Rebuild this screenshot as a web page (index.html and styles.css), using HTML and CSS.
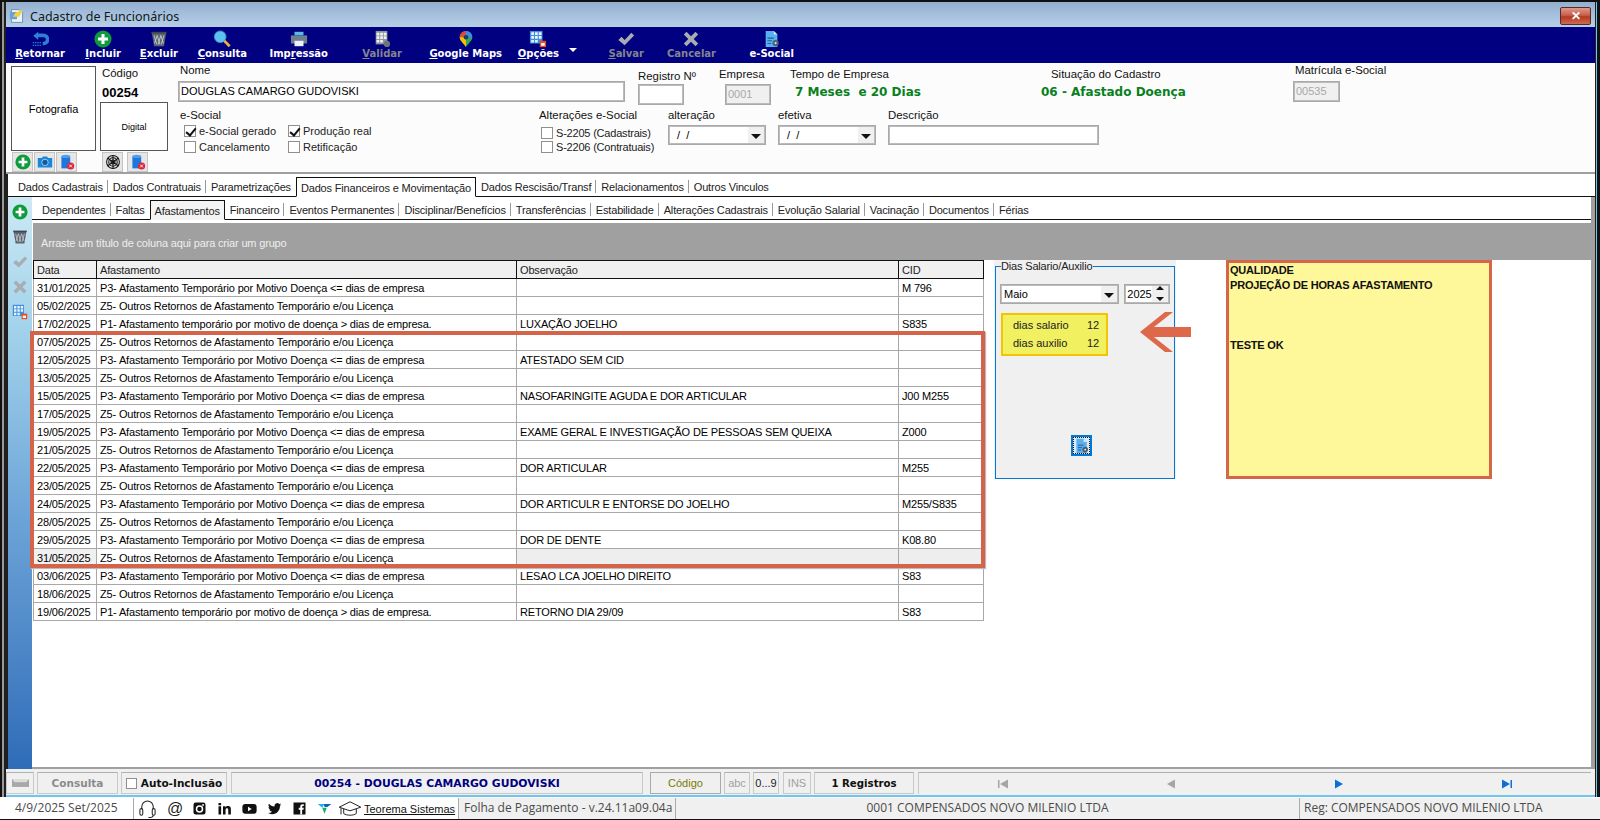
FILE: index.html
```html
<!DOCTYPE html>
<html lang="pt-BR">
<head>
<meta charset="utf-8">
<title>Cadastro de Funcionários</title>
<link rel="stylesheet" href="styles.css">
</head>
<body>
<svg class="defs" width="0" height="0" aria-hidden="true">
  <symbol id="i-plus" viewBox="0 0 20 20"><circle cx="10" cy="10" r="9.5" fill="#0f9a3c"/><path d="M10 4.5v11M4.5 10h11" stroke="#fff" stroke-width="3.4"/></symbol>
  <symbol id="i-return" viewBox="0 0 20 20"><path d="M8 2 2.5 6.5 8 11V8h6a2.5 2.5 0 0 1 0 5h-1v4h1a6.5 6.5 0 0 0 0-13H8z" fill="#2f7fd6"/><path d="M2 14h10M2 17h10" stroke="#2f7fd6" stroke-width="1.4" stroke-dasharray="1.5 1"/></symbol>
  <symbol id="i-trash" viewBox="0 0 20 20"><path d="M2 3h16l-2.5 15h-11z" fill="#5c6670"/><path d="M4.5 6l3 10M8 6l3 10M12 6l3 9M15.500 6l-3 10M12 6l-3 10M8 6l-3 9" stroke="#cfd5da" stroke-width=".9"/><path d="M1.500 2h17v2h-17z" fill="#3f4850"/></symbol>
  <symbol id="i-search" viewBox="0 0 20 20"><circle cx="8" cy="7.500" r="6.500" fill="#5cc0f0" stroke="#2f90cc"/><path d="M12.500 12l6 6" stroke="#e8b040" stroke-width="3"/></symbol>
  <symbol id="i-print" viewBox="0 0 20 20"><path d="M5 2h10v4H5z" fill="#5cb8e6"/><path d="M1 6h18v9H1z" fill="#6e7f8e"/><path d="M5 12h10v6H5z" fill="#e8f2f8"/></symbol>
  <symbol id="i-grid-gear" viewBox="0 0 20 20"><path d="M3 1h13v15H3z" fill="#8d949b"/><path d="M4 3h3v3H4zm4 0h3v3H8zm4 0h3v3h-3zM4 7h3v3H4zm4 0h3v3H8zm4 0h3v3h-3zM4 11h3v3H4zm4 0h3v3H8z" fill="#eef0f2"/><circle cx="15.500" cy="15.500" r="3.500" fill="#6d747b"/></symbol>
  <symbol id="i-pin" viewBox="0 0 20 20"><path d="M10 1a7 7 0 0 1 7 7c0 4-4 6-7 11-3-5-7-7-7-11a7 7 0 0 1 7-7z" fill="#34a853"/><path d="M10 1a7 7 0 0 1 7 7l-4 0a3 3 0 0 0-3-3z" fill="#4285f4"/><path d="M3 8a7 7 0 0 1 7-7v4a3 3 0 0 0-3 3z" fill="#ea4335"/><path d="M3 8h4l3 3v8c-3-5-7-7-7-11z" fill="#fbbc04"/><circle cx="10" cy="8" r="2.500" fill="#1a3a80"/></symbol>
  <symbol id="i-grid-red" viewBox="0 0 20 20"><path d="M1 1h14v14H1z" fill="#3f8fe0"/><path d="M2.500 2.500h3v3h-3zm4.200 0h3v3h-3zm4.200 0h3v3h-3zM2.500 6.700h3v3h-3zm4.200 0h3v3h-3zm4.200 0h3v3h-3zM2.500 11h3v3h-3zm4.200 0h3v3h-3z" fill="#e8f3fd"/><path d="M12 12h7v7h-7z" fill="#f04a20"/><path d="M13.500 14.500h4v3h-4z" fill="#fff"/></symbol>
  <symbol id="i-check" viewBox="0 0 20 20"><path d="M1.500 11 5 7.500l3.500 3.500L16 3l3 3-10.500 11z" fill="#a7adb2"/></symbol>
  <symbol id="i-x" viewBox="0 0 20 20"><path d="M2 5l3-3 5 5 5-5 3 3-5 5 5 5-3 3-5-5-5 5-3-3 5-5z" fill="#a7adb2"/></symbol>
  <symbol id="i-doc-gear" viewBox="0 0 20 20"><path d="M3 1h9l4 4v14H3z" fill="#59b0ee"/><path d="M12 1l4 4h-4z" fill="#d5ecfb"/><path d="M5 9h7M5 12h5M5 15h4" stroke="#1d5f9c" stroke-width="1.200"/><circle cx="14" cy="14.500" r="3.500" fill="#4a5f70"/><circle cx="14" cy="14.500" r="1.200" fill="#cfe4f2"/></symbol>
  <symbol id="i-camera" viewBox="0 0 20 20"><path d="M1 5h5l1.500-2h5L14 5h5v12H1z" fill="#1c87d8"/><circle cx="10" cy="10.500" r="4" fill="#0d5ba0" stroke="#bfe0f8"/></symbol>
  <symbol id="i-db-del" viewBox="0 0 20 20"><path d="M3 3h11v15H3z" fill="#1f76dc"/><ellipse cx="8.500" cy="3" rx="5.500" ry="2" fill="#4da0ee"/><circle cx="14.500" cy="15" r="4.500" fill="#e0243a"/><path d="M12.800 13.300l3.400 3.400m0-3.400l-3.400 3.400" stroke="#fff" stroke-width="1.200"/></symbol>
  <symbol id="i-finger" viewBox="0 0 20 20"><g fill="none" stroke="#111" stroke-width="1.300"><circle cx="10" cy="10" r="8"/><circle cx="10" cy="10" r="5.300"/><circle cx="10" cy="10" r="2.500"/><path d="M3 5l14 10M3 15 17 5M10 2v16"/></g></symbol>
  <symbol id="i-wicon" viewBox="0 0 20 20"><path d="M3 2h10l4 4v12H3z" fill="#e8f3fb" stroke="#5b7fa0"/><path d="M1 5h9v9H1z" fill="#6a9fd8"/><path d="M5 11l3-5 9-4-4 9z" fill="#f5d142"/></symbol>
  <symbol id="i-headset" viewBox="0 0 20 20"><g fill="none" stroke="#222" stroke-width="1.100"><path d="M4 11V8a6 6 0 0 1 12 0v3"/><rect x="2" y="10" width="3" height="7" rx="1.500"/><rect x="15" y="10" width="3" height="7" rx="1.500"/><path d="M16 17c0 2-3 2.500-5 2.500"/></g></symbol>
  <symbol id="i-insta" viewBox="0 0 20 20"><rect x="2" y="2" width="16" height="16" rx="3" fill="#111"/><circle cx="10" cy="10.500" r="4" fill="none" stroke="#fff" stroke-width="2"/><circle cx="14.700" cy="5.300" r="1.200" fill="#fff"/></symbol>
  <symbol id="i-in" viewBox="0 0 20 20"><path d="M2 7h3.500v11H2zM2 2.500h3.500V5.500H2zM8 7h3.300v1.600C12 7.500 13.300 6.800 15 6.800c2.500 0 3.500 1.700 3.500 4.200v7H15v-6.300c0-1.300-.5-2.100-1.600-2.100s-2 .8-2 2.300V18H8z" fill="#111"/></symbol>
  <symbol id="i-yt" viewBox="0 0 20 20"><rect x="0.500" y="4" width="19" height="13" rx="4" fill="#111"/><path d="M8 7.500v6l5-3z" fill="#fff"/></symbol>
  <symbol id="i-tw" viewBox="0 0 20 20"><path d="M19 4.500c-.7.300-1.400.500-2 .6.800-.5 1.300-1.200 1.600-2-.7.400-1.500.7-2.300.9A3.700 3.700 0 0 0 10 7.300C7 7.100 4.300 5.700 2.500 3.500 1.500 5.200 2 7.300 3.600 8.400c-.6 0-1.100-.2-1.600-.5 0 1.800 1.300 3.300 3 3.700-.5.100-1.100.2-1.700.1.500 1.500 1.900 2.500 3.500 2.600A7.500 7.500 0 0 1 1 15.800c1.700 1 3.600 1.700 5.700 1.700 6.900 0 10.800-5.800 10.500-11 .7-.6 1.300-1.200 1.800-2z" fill="#111"/></symbol>
  <symbol id="i-fb" viewBox="0 0 20 20"><rect x="2" y="2" width="16" height="16" fill="#111"/><path d="M11 18v-6.500H9V9h2V7.200c0-2 1.200-3 3-3h1.700v2.500h-1.200c-.8 0-1 .4-1 1V9h2.200l-.4 2.500h-1.800V18z" fill="#fff"/></symbol>
  <symbol id="i-logo" viewBox="0 0 20 20"><path d="M1 4h9l-3 5z" fill="#18b6e6"/><path d="M9 4h10l-5 4h-4z" fill="#1060c0"/><path d="M7 9h6l-3 8z" fill="#18b060"/></symbol>
  <symbol id="i-cap" viewBox="0 0 26 20"><g fill="none" stroke="#222" stroke-width="1.100"><path d="M1 8l12-6 12 6-12 4z"/><path d="M6 10v5c3 2.500 11 2.500 14 0v-5"/><path d="M3 9v7"/></g></symbol>
  <symbol id="i-kb" viewBox="0 0 26 12"><path d="M0 0h26v12H0z" fill="#a7a7a7"/><path d="M0 0l4 5h18l4-5z" fill="#dcdcdc"/></symbol>
</svg>

<div class="frame">
  <div class="window">
    <div class="title">
      <svg class="ico16"><use href="#i-wicon"/></svg>
      <span>Cadastro de Funcionários</span>
      <button class="close" aria-label="Fechar">✕</button>
    </div>

    <div class="toolbar">
      <div class="tb"><svg class="ico18"><use href="#i-return"/></svg><span><u>R</u>etornar</span></div>
      <div class="tb"><svg class="ico18"><use href="#i-plus"/></svg><span><u>I</u>ncluir</span></div>
      <div class="tb"><svg class="ico18"><use href="#i-trash"/></svg><span><u>E</u>xcluir</span></div>
      <div class="tb"><svg class="ico18"><use href="#i-search"/></svg><span><u>C</u>onsulta</span></div>
      <div class="tb"><svg class="ico18"><use href="#i-print"/></svg><span>Imp<u>r</u>essão</span></div>
      <div class="tb off"><svg class="ico18"><use href="#i-grid-gear"/></svg><span><u>V</u>alidar</span></div>
      <div class="tb"><svg class="ico18"><use href="#i-pin"/></svg><span><u>G</u>oogle Maps</span></div>
      <div class="tb"><svg class="ico18"><use href="#i-grid-red"/></svg><span><u>O</u>pções</span></div>
      <div class="tb-tri"></div>
      <div class="tb off"><svg class="ico18"><use href="#i-check"/></svg><span><u>S</u>alvar</span></div>
      <div class="tb off"><svg class="ico18"><use href="#i-x"/></svg><span>Cancelar</span></div>
      <div class="tb"><svg class="ico18"><use href="#i-doc-gear"/></svg><span>e-Social</span></div>
    </div>

    <div class="header">
      <div class="photo-col">
        <div class="photo">Fotografia</div>
        <div class="mini-row">
          <button class="mini"><svg class="ico15"><use href="#i-plus"/></svg></button>
          <button class="mini"><svg class="ico15"><use href="#i-camera"/></svg></button>
          <button class="mini"><svg class="ico15"><use href="#i-db-del"/></svg></button>
        </div>
      </div>
      <div class="code-col">
        <div class="lbl code-lbl">Código</div>
        <div class="code-val">00254</div>
        <div class="digital">Digital</div>
        <div class="mini-row mini-row-b">
          <button class="mini"><svg class="ico15"><use href="#i-finger"/></svg></button>
          <button class="mini"><svg class="ico15"><use href="#i-db-del"/></svg></button>
        </div>
      </div>
      <div class="form-col">
        <div class="row-a">
          <div class="f f-nome"><div class="lbl">Nome</div><div class="input">DOUGLAS CAMARGO GUDOVISKI</div></div>
          <div class="f f-reg"><div class="lbl">Registro Nº</div><div class="input"></div></div>
          <div class="f f-emp"><div class="lbl">Empresa</div><div class="input dis">0001</div></div>
          <div class="f f-tempo"><div class="lbl">Tempo de Empresa</div><div class="val-green">7 Meses&nbsp; e 20 Dias</div></div>
          <div class="f f-sit"><div class="lbl">Situação do Cadastro</div><div class="val-green">06 - Afastado Doença</div></div>
          <div class="f f-mat"><div class="lbl">Matrícula e-Social</div><div class="input dis">00535</div></div>
        </div>
        <div class="row-b">
          <div class="g-es">
            <div class="lbl">e-Social</div>
            <div class="checks">
              <label class="ck"><i class="box on"></i>e-Social gerado</label>
              <label class="ck"><i class="box on"></i>Produção real</label>
              <label class="ck"><i class="box"></i>Cancelamento</label>
              <label class="ck"><i class="box"></i>Retificação</label>
            </div>
          </div>
          <div class="g-alt">
            <div class="lbl">Alterações e-Social</div>
            <label class="ck ck-t"><i class="box"></i>S-2205 (Cadastrais)</label>
            <label class="ck ck-t"><i class="box"></i>S-2206 (Contratuais)</label>
          </div>
          <div class="f f-d"><div class="lbl">alteração</div><div class="input sel">&nbsp;/&nbsp;&nbsp;/<b class="drop"></b></div></div>
          <div class="f f-d"><div class="lbl">efetiva</div><div class="input sel">&nbsp;/&nbsp;&nbsp;/<b class="drop"></b></div></div>
          <div class="f f-desc"><div class="lbl">Descrição</div><div class="input"></div></div>
        </div>
      </div>
    </div>

    <div class="tabs">
      <span class="tab">Dados Cadastrais</span>
      <span class="tab">Dados Contratuais</span>
      <span class="tab pre">Parametrizações</span>
      <span class="tab active">Dados Financeiros e Movimentação</span>
      <span class="tab">Dados Rescisão/Transf</span>
      <span class="tab">Relacionamentos</span>
      <span class="tab last">Outros Vinculos</span>
    </div>

    <div class="body">
      <div class="side">
        <svg class="ico16 s1"><use href="#i-plus"/></svg>
        <svg class="ico16"><use href="#i-trash"/></svg>
        <svg class="ico16"><use href="#i-check"/></svg>
        <svg class="ico16"><use href="#i-x"/></svg>
        <svg class="ico16"><use href="#i-grid-red"/></svg>
      </div>
      <div class="content">
        <div class="subtabs">
          <span class="tab">Dependentes</span>
          <span class="tab pre">Faltas</span>
          <span class="tab active">Afastamentos</span>
          <span class="tab">Financeiro</span>
          <span class="tab">Eventos Permanentes</span>
          <span class="tab">Disciplinar/Benefícios</span>
          <span class="tab">Transferências</span>
          <span class="tab">Estabilidade</span>
          <span class="tab">Alterações Cadastrais</span>
          <span class="tab">Evolução Salarial</span>
          <span class="tab">Vacinação</span>
          <span class="tab">Documentos</span>
          <span class="tab last">Férias</span>
        </div>
        <div class="groupbar">Arraste um título de coluna aqui para criar um grupo</div>
        <div class="work">
          <div class="grid-wrap">
            <table class="grid">
              <colgroup><col class="c1"><col class="c2"><col class="c3"><col class="c4"></colgroup>
              <thead><tr><th>Data</th><th>Afastamento</th><th>Observação</th><th>CID</th></tr></thead>
              <tbody>
                <tr><td>31/01/2025</td><td>P3- Afastamento Temporário por Motivo Doença &lt;= dias de empresa</td><td></td><td>M 796</td></tr>
                <tr><td>05/02/2025</td><td>Z5- Outros Retornos de Afastamento Temporário e/ou Licença</td><td></td><td></td></tr>
                <tr><td>17/02/2025</td><td>P1- Afastamento temporário por motivo de doença &gt; dias de empresa.</td><td>LUXAÇÃO JOELHO</td><td>S835</td></tr>
                <tr><td>07/05/2025</td><td>Z5- Outros Retornos de Afastamento Temporário e/ou Licença</td><td></td><td></td></tr>
                <tr><td>12/05/2025</td><td>P3- Afastamento Temporário por Motivo Doença &lt;= dias de empresa</td><td>ATESTADO SEM CID</td><td></td></tr>
                <tr><td>13/05/2025</td><td>Z5- Outros Retornos de Afastamento Temporário e/ou Licença</td><td></td><td></td></tr>
                <tr><td>15/05/2025</td><td>P3- Afastamento Temporário por Motivo Doença &lt;= dias de empresa</td><td>NASOFARINGITE AGUDA E DOR ARTICULAR</td><td>J00 M255</td></tr>
                <tr><td>17/05/2025</td><td>Z5- Outros Retornos de Afastamento Temporário e/ou Licença</td><td></td><td></td></tr>
                <tr><td>19/05/2025</td><td>P3- Afastamento Temporário por Motivo Doença &lt;= dias de empresa</td><td>EXAME GERAL E INVESTIGAÇÃO DE PESSOAS SEM QUEIXA</td><td>Z000</td></tr>
                <tr><td>21/05/2025</td><td>Z5- Outros Retornos de Afastamento Temporário e/ou Licença</td><td></td><td></td></tr>
                <tr><td>22/05/2025</td><td>P3- Afastamento Temporário por Motivo Doença &lt;= dias de empresa</td><td>DOR ARTICULAR</td><td>M255</td></tr>
                <tr><td>23/05/2025</td><td>Z5- Outros Retornos de Afastamento Temporário e/ou Licença</td><td></td><td></td></tr>
                <tr><td>24/05/2025</td><td>P3- Afastamento Temporário por Motivo Doença &lt;= dias de empresa</td><td>DOR ARTICULR E ENTORSE DO JOELHO</td><td>M255/S835</td></tr>
                <tr><td>28/05/2025</td><td>Z5- Outros Retornos de Afastamento Temporário e/ou Licença</td><td></td><td></td></tr>
                <tr><td>29/05/2025</td><td>P3- Afastamento Temporário por Motivo Doença &lt;= dias de empresa</td><td>DOR DE DENTE</td><td>K08.80</td></tr>
                <tr class="cur"><td>31/05/2025</td><td>Z5- Outros Retornos de Afastamento Temporário e/ou Licença</td><td></td><td></td></tr>
                <tr><td>03/06/2025</td><td>P3- Afastamento Temporário por Motivo Doença &lt;= dias de empresa</td><td>LESAO LCA JOELHO DIREITO</td><td>S83</td></tr>
                <tr><td>18/06/2025</td><td>Z5- Outros Retornos de Afastamento Temporário e/ou Licença</td><td></td><td></td></tr>
                <tr><td>19/06/2025</td><td>P1- Afastamento temporário por motivo de doença &gt; dias de empresa.</td><td>RETORNO DIA 29/09</td><td>S83</td></tr>
              </tbody>
            </table>
            <div class="redbox"></div>
          </div>

          <div class="panel">
            <fieldset class="dias">
              <legend>Dias Salario/Auxilio</legend>
              <div class="dias-top">
                <div class="input sel mes">Maio<b class="drop"></b></div>
                <div class="input spin">2025<b class="spinbtn"><i class="up"></i><i class="down"></i></b></div>
              </div>
              <div class="ybox">
                <div class="yrow"><span>dias salario</span><span>12</span></div>
                <div class="yrow"><span>dias auxilio</span><span>12</span></div>
              </div>
              <button class="calc"><svg class="ico16"><use href="#i-doc-gear"/></svg></button>
            </fieldset>
            <svg class="arrow" viewBox="0 0 51 40"><path d="M0 20 25 0h8L14 15h37v10H14l19 15h-8z" fill="#dd684a"/></svg>
          </div>

          <div class="note">QUALIDADE<br>PROJEÇÃO DE HORAS AFASTAMENTO<br><br><br><br>TESTE OK</div>
        </div>
      </div>
    </div>

    <div class="status1">
      <div class="cell c-kb"><svg class="kb"><use href="#i-kb"/></svg></div>
      <div class="cell c-cons">Consulta</div>
      <div class="cell c-auto"><i class="box"></i>Auto-Inclusão</div>
      <div class="cell c-name">00254 - DOUGLAS CAMARGO GUDOVISKI</div>
      <div class="cell c-cod">Código</div>
      <div class="cell c-abc">abc</div>
      <div class="cell c-09">0...9</div>
      <div class="cell c-ins">INS</div>
      <div class="cell c-reg">1 Registros</div>
      <div class="cell c-nav">
        <svg class="nav" viewBox="0 0 12 12"><path d="M1 2h1.500v8H1zM11 1.500v9L3 6z" fill="#a5a5a5"/></svg>
        <svg class="nav" viewBox="0 0 12 12"><path d="M10 1.500v9L2 6z" fill="#a5a5a5"/></svg>
        <svg class="nav" viewBox="0 0 12 12"><path d="M2 1.500v9L10 6z" fill="#0a6fd8"/></svg>
        <svg class="nav" viewBox="0 0 12 12"><path d="M1 1.500v9L9 6zM9.500 2H11v8H9.500z" fill="#0a6fd8"/></svg>
      </div>
    </div>
  </div>

  <div class="status2">
    <div class="s2-date">4/9/2025 Set/2025</div>
    <div class="s2-icons">
      <svg class="soc s-head"><use href="#i-headset"/></svg>
      <span class="at">@</span>
      <svg class="soc"><use href="#i-insta"/></svg>
      <svg class="soc"><use href="#i-in"/></svg>
      <svg class="soc"><use href="#i-yt"/></svg>
      <svg class="soc"><use href="#i-tw"/></svg>
      <svg class="soc"><use href="#i-fb"/></svg>
      <svg class="soc"><use href="#i-logo"/></svg>
      <svg class="cap"><use href="#i-cap"/></svg>
      <span class="teo">Teorema Sistemas</span>
    </div>
    <div class="s2-ver">Folha de Pagamento - v.24.11a09.04a</div>
    <div class="s2-emp">0001 COMPENSADOS NOVO MILENIO LTDA</div>
    <div class="s2-reg">Reg: COMPENSADOS NOVO MILENIO LTDA</div>
  </div>
</div>
</body>
</html>
```
FILE: styles.css
```css
* { box-sizing: border-box; }
html, body { margin: 0; padding: 0; }
body { width: 1600px; height: 820px; overflow: hidden; background: #fff; font: 11px "Liberation Sans", Tahoma, sans-serif; color: #000; }
.defs { position: absolute; }
button { padding: 0; margin: 0; font: inherit; }

.frame { width: 1600px; height: 820px; display: flex; flex-direction: column; background: #1a1a1a; }
.window { height: 797px; padding: 3px 5px 0 6px; border-top: 2px solid #111; border-left: 1px solid #111; display: flex; flex-direction: column; background: #1f1f1f; position: relative; box-shadow: inset -3px 0 0 #111, inset -4px 0 0 #6ec6ee, inset 1px 0 0 #111, inset 3px 0 0 #999; }
.ico16 { width: 16px; height: 16px; display: block; }
.ico18 { width: 18px; height: 18px; display: block; }
.ico15 { width: 16px; height: 16px; display: block; }

.title { flex: none; height: 25px; margin: -3px 0 0 -1px; padding: 3px 0 0 3px; display: flex; align-items: center; gap: 5px; background: linear-gradient(#93afcf, #b7d0e9); font: 12.500px "Noto Sans", sans-serif; color: #101820; }
.title span { flex: 1; }
.close { width: 31px; height: 18px; margin-right: 4px; border: 1px solid #5b2b23; border-radius: 2px; background: linear-gradient(#dd9a8c, #c8604c 45%, #b5391f 55%, #cc6a55); color: #fff; font-size: 12px; font-weight: 700; line-height: 14px; }

.toolbar { height: 36px; flex: none; margin-left: -1px; padding-left: 8px; background: #000080; display: grid; grid-template-columns: 51px 56px 57px 69px 81px 74px 100px 57px 20px 65px 72px 78px; align-items: start; }
.tb { justify-self: end; display: flex; flex-direction: column; align-items: center; color: #fff; font: 700 10px/14px "DejaVu Sans", sans-serif; white-space: nowrap; padding-top: 3px; }
.tb span { display: block; margin-top: -1px; }
.tb.off { color: #83868c; }
.tb-tri { justify-self: end; margin: 21px 2px 0 0; width: 0; height: 0; border: 4px solid transparent; border-top: 4px solid #fff; border-bottom: 0; }

.header { height: 111px; flex: none; margin-left: -1px; padding: 3px 0 0 5px; display: flex; background: #fcfcfc; border-bottom: 2px solid #a0a0a0; }
.photo-col { width: 89px; flex: none; }
.photo { width: 85px; height: 85px; border: 1px solid #555; background: #fff; display: flex; align-items: center; justify-content: center; }
.mini-row { display: flex; gap: 1px; padding-left: 1px; margin-top: 1px; }
.mini { width: 21px; height: 20px; border: 1px solid #c4c4c4; background: #e6e6e6; display: flex; align-items: center; justify-content: center; }
.code-col { width: 78px; flex: none; }
.lbl { line-height: 14px; white-space: nowrap; color: #111; font-size: 11.400px; }
.code-lbl { padding-left: 2px; line-height: 16px; margin-top: -1px; }
.code-val { font: 700 13px/17px "Liberation Sans", sans-serif; padding-left: 2px; margin-top: 3px; }
.digital { width: 68px; height: 49px; margin-top: 1px; border: 1px solid #555; background: #fff; display: flex; align-items: center; justify-content: center; font-size: 9px; }
.mini-row-b { gap: 4px; padding-left: 2px; }

.form-col { flex: 1; }
.row-a { display: flex; height: 42px; }
.row-b { display: flex; }
.f { flex: none; }
.input { height: 21px; border: 1px solid #a9a9a9; background: #fff; padding-left: 2px; line-height: 18px; white-space: nowrap; position: relative; box-shadow: inset 0 0 0 1px #bbb; }
.input.dis { background: #f0f0f0; color: #a8a8a8; }
.f-nome { width: 447px; }
.f-nome .lbl { padding-left: 2px; line-height: 13px; margin-top: -2px; }
.f-nome .input { margin-top: 4px; }
.f-reg { width: 46px; margin-left: 13px; padding-top: 3px; }
.f-reg .input { margin-top: 1px; }
.f-emp { width: 46px; margin-left: 41px; padding-top: 1px; }
.f-emp .lbl { margin-left: -6px; }
.f-emp .input { margin-top: 3px; }
.f-tempo { width: 170px; margin-left: 19px; padding-top: 1px; }
.val-green { color: #08801e; font: 700 12px/18px "DejaVu Sans", sans-serif; margin-top: 2px; margin-left: 5px; white-space: nowrap; }
.f-sit { width: 200px; margin-left: 91px; padding-top: 1px; }
.f-sit .val-green { margin-left: -10px; }
.f-mat { width: 47px; margin-left: 42px; }
.f-mat .lbl { padding-left: 2px; margin-top: -2px; line-height: 13px; }
.f-mat .input { margin-top: 4px; }

.g-es { width: 361px; padding-left: 2px; }
.checks { display: grid; grid-template-columns: 104px 130px; padding: 2px 0 0 4px; row-gap: 2px; }
.ck { display: flex; align-items: center; gap: 3px; line-height: 14px; white-space: nowrap; color: #222; }
.box { display: inline-block; flex: none; width: 12px; height: 12px; border: 1px solid #8f8f8f; background: #fff; position: relative; }
.box.on::after { content: ""; position: absolute; left: 3px; top: 0; width: 4px; height: 8px; border: solid #111; border-width: 0 2px 2px 0; transform: rotate(40deg); }
.g-alt { width: 129px; }
.ck-t { padding-left: 2px; letter-spacing: -.2px; }
.g-alt .lbl { margin-bottom: 4px; }
.f-d { width: 98px; margin-right: 12px; }
.f-d .input, .f-desc .input { height: 20px; margin-top: 3px; }
.f-desc { width: 211px; }
.sel { padding-left: 5px; }
.drop { position: absolute; right: 1px; top: 1px; bottom: 1px; width: 16px; background: #f0f0f0; }
.drop::after { content: ""; position: absolute; left: 3px; top: 7px; border: 5px solid transparent; border-top: 5px solid #111; border-bottom: 0; }

.tabs { height: 23px; flex: none; margin-left: 1px; display: flex; align-items: flex-end; background: #fff; border-bottom: 1px solid #111; padding-left: 5px; position: relative; }
.tab { height: 19px; padding: 0 5px; line-height: 20px; white-space: nowrap; color: #222; position: relative; letter-spacing: -.17px; }
.tab + .tab::before { content: ""; position: absolute; left: -1px; top: 3px; bottom: 3px; width: 1px; background: #999; }
.tab.active { height: 20px; margin-bottom: -1px; border: 1px solid #111; border-bottom: 1px solid #fff; background: #fff; z-index: 1; padding: 0 4px; }
.tab.active::before, .tab.active + .tab::before { display: none; }

.body { flex: 1; min-height: 0; margin-left: 1px; display: flex; background: #fff; }
.side { width: 24px; flex: none; background: linear-gradient(#cce9f4, #9fd0ea 25%, #6ea5d8 55%, #2f6cb8); display: flex; flex-direction: column; align-items: center; gap: 9px; padding-top: 7px; }
.content { flex: 1; min-width: 0; display: flex; flex-direction: column; border-right: 4px solid #a0a0a0; border-bottom: 2px solid #a0a0a0; }
.subtabs { height: 23px; flex: none; display: flex; align-items: flex-end; border-bottom: 1px solid #111; padding-left: 5px; margin-bottom: 3px; }
.subtabs .active { background: #f4f4f4; border-bottom-color: #f4f4f4; }
.groupbar { height: 37px; flex: none; margin-left: 1px; background: #a0a0a0; color: #eee; padding: 13px 0 0 8px; line-height: 14px; letter-spacing: -.17px; }
.work { flex: 1; min-height: 0; display: flex; align-items: flex-start; padding-left: 1px; }
.grid-wrap { width: 950px; flex: none; position: relative; }
.grid { width: 950px; table-layout: fixed; border-collapse: collapse; letter-spacing: -.17px; }
.c1 { width: 63px; } .c2 { width: 420px; } .c3 { width: 382px; } .c4 { width: 85px; }
.grid th { height: 18px; background: #f0f0f0; font-weight: 400; text-align: left; border: 1px solid #111; padding: 1px 3px 0; line-height: 15px; color: #222; }
.grid td { height: 18px; border: 1px solid #a8a8a8; padding: 1px 2px 0 3px; line-height: 15px; white-space: nowrap; overflow: hidden; }
.grid tr.cur td:first-child { background: #f0f0f0; }
.grid tr.cur td:nth-child(n+3) { background: #eee; }
.redbox { position: absolute; left: -3px; top: 71px; width: 955px; height: 237px; border: 4px solid #d4634a; box-shadow: 1px 1px 1px #bbb; pointer-events: none; }

.panel { width: 182px; height: 219px; flex: none; margin-left: 11px; background: #f0f0f0; position: relative; padding: 0 1px; }
.dias { margin: 0; padding: 0 4px; height: 219px; border: 1px solid #0078d7; min-width: 0; position: relative; }
.dias legend { padding: 0 1px 0 0; margin-left: 1px; line-height: 12px; height: 12px; color: #222; letter-spacing: -.17px; }
.dias-top { display: flex; gap: 5px; margin-top: 12px; }
.mes { width: 120px; height: 20px; padding-left: 3px; }
.spin { width: 46px; height: 20px; padding-left: 2px; }
.spinbtn { position: absolute; right: 1px; top: 1px; bottom: 1px; width: 16px; background: #f0f0f0; }
.up, .down { position: absolute; left: 4px; border: 4px solid transparent; }
.up { top: 0; border-bottom: 4px solid #111; border-top: 0; }
.down { bottom: 1px; border-top: 4px solid #111; border-bottom: 0; }
.ybox { width: 107px; height: 43px; margin: 9px 0 0 1px; background: #f0f060; border: 2px solid #f5c400; padding: 1px 0 0 10px; }
.yrow { display: flex; line-height: 18px; color: #222; }
.yrow span:first-child { width: 74px; }
.calc { display: block; width: 21px; height: 21px; margin: 79px 0 0 71px; border: 2px solid #0078d7; background: #dfe9f5; outline: 1px dotted #111; outline-offset: -3px; }
.calc svg { margin: 0.500px; }
.arrow { position: absolute; left: 146px; top: 52px; width: 51px; height: 40px; }

.note { width: 266px; height: 219px; flex: none; margin-left: 50px; background: #fff89a; border: 3px solid #d7654a; padding: 0 0 0 1px; font: 700 11px/15px "Liberation Sans", sans-serif; letter-spacing: -.2px; color: #111; }

.status1 { height: 28px; flex: none; margin: 0 0 0 -1px; display: flex; align-items: center; background: #f0f0f0; border-bottom: 2px solid #6ec6ee; padding-top: 2px; color: #333; }
.cell { height: 22px; border: 1px solid #c9c9c9; border-top-color: #b0b0b0; display: flex; align-items: center; justify-content: center; flex: none; white-space: nowrap; }
.c-kb { width: 28px; } .kb { width: 17px; height: 8px; }
.c-cons { width: 81px; margin-left: 3px; font: 700 10.500px "DejaVu Sans", sans-serif; color: #8b8b8b; }
.c-auto { width: 106px; margin-left: 3px; font: 700 10.500px "DejaVu Sans", sans-serif; color: #111; gap: 4px; }
.c-auto .box { width: 11px; height: 11px; }
.c-name { width: 412px; margin-left: 4px; font: 700 10.800px "DejaVu Sans", sans-serif; color: #000080; }
.c-cod { width: 71px; margin-left: 7px; color: #7a7a00; border-color: #aaa; }
.c-abc { width: 26px; margin-left: 3px; color: #a0a0a0; }
.c-09 { width: 26px; margin-left: 3px; color: #222; }
.c-ins { width: 28px; margin-left: 4px; color: #a0a0a0; }
.c-reg { width: 100px; margin-left: 3px; font: 700 10.200px "DejaVu Sans", sans-serif; color: #111; }
.c-nav { flex: 1; margin-left: 4px; margin-right: 4px; justify-content: space-around; border-right: 0; border-bottom: 0; }
.nav { width: 12px; height: 12px; }

.status2 { height: 23px; flex: none; background: #f0f0f0; border-top: 1px solid #fff; border-bottom: 1px solid #111; display: flex; align-items: center; font: 12px/18px "Open Sans", sans-serif; color: #4a4a4a; white-space: nowrap; }
.s2-date { width: 134px; padding-left: 15px; height: 100%; line-height: 20px; border-right: 1px solid #aaa; background: #fff; flex: none; }
.s2-icons { width: 325px; height: 100%; flex: none; display: flex; align-items: center; gap: 10px; padding-left: 4px; border-right: 1px solid #aaa; background: #fff; }
.soc { width: 15px; height: 15px; flex: none; }
.s-head { width: 19px; height: 19px; }
.at { width: 15px; font: 16px "Liberation Sans", sans-serif; color: #222; text-align: center; flex: none; }
.cap { width: 24px; height: 18px; flex: none; margin-left: -4px; }
.teo { text-decoration: underline; color: #111; font: 11px "Liberation Sans", sans-serif; margin-left: -8px; }
.s2-ver { width: 217px; padding-left: 5px; height: 100%; line-height: 20px; border-right: 1px solid #aaa; flex: none; }
.s2-emp { width: 624px; height: 100%; line-height: 20px; text-align: center; border-right: 1px solid #aaa; flex: none; }
.s2-reg { padding-left: 4px; line-height: 20px; height: 100%; }
```
